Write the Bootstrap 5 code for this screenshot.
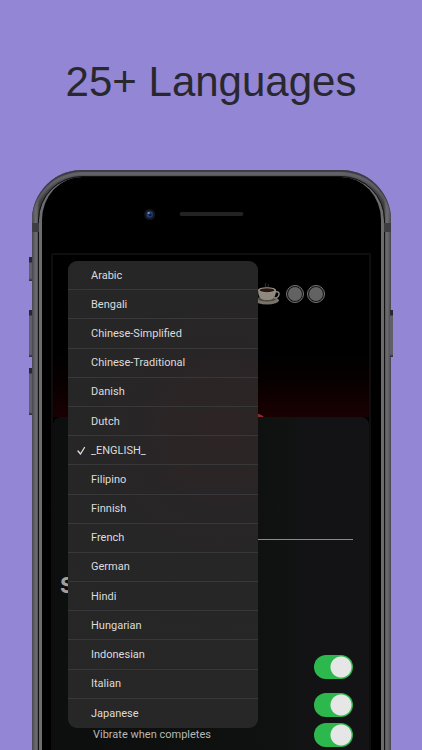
<!DOCTYPE html>
<html lang="en">
<head>
<meta charset="utf-8">
<meta name="viewport" content="width=device-width, initial-scale=1">
<title>25+ Languages</title>
<link href="https://cdn.jsdelivr.net/npm/bootstrap@5.3.0/dist/css/bootstrap.min.css" rel="stylesheet">
<style>
body{background:#9386d4;font-family:Roboto,"Liberation Sans",sans-serif;font-size:11px}
.stage{height:100vh}
.headline{font:400 42px/48px "Liberation Sans",Arial,sans-serif;color:#29282f;padding:58px 0 64px}
/* phone body: metal rim, groove, inner bezel */
.phone{margin:0 31px 0 32px;border-radius:50px 50px 0 0;padding:7px 7px 0;
 background:linear-gradient(90deg,#3c3a45 0,#5c5b61 2px,#6f6f72 4px,#55555a 6px,#3b3b40 7px,#3b3b40 calc(100% - 7px),#55555a calc(100% - 6px),#6f6f72 calc(100% - 4px),#5c5b61 calc(100% - 2px),#3c3a45 100%);
 box-shadow:inset 0 2px 1px #3c3a45,inset 0 6px 3px #66656b}
.glass{background:#000;border:solid #6c6c6e;border-width:0 3px;border-radius:43px 43px 0 0;outline:1px solid #111;padding:0 10px 0 9px}
.face{height:76px}
.band{position:absolute;top:53px;width:7px;height:9px;background:#3d3d42}
.side-key{position:absolute;width:3px;background:linear-gradient(#29282f 0 5px,#605f68 6px,#605f68 calc(100% - 3px),#29282f)}
.key-left{left:-3px}
.key-right{right:-2px}
.key-mute{top:87px;height:24px}
.key-upper{top:140px;height:47px}
.key-lower{top:198px;height:47px}
.screen{border:2px solid #0e0e0e;border-bottom:0;border-radius:2px 2px 0 0}
.hero{height:162px;background:linear-gradient(#000 0 60%,#080000 78%,#1a0002);padding:26px 43px 0 0}
.arc{position:absolute;right:104px;bottom:-1px}
.panel{background:linear-gradient(90deg,#0c0f0d,#0e110f 60%,#131315 85%);border-radius:8px 8px 0 0;padding:95px 16px 0 7px}
.field{width:140px;height:28px;background:none;border:0;border-bottom:1px solid #8a8a8a;color:#ccc;border-radius:0}
.section-title{font:700 22px/24px Inter,sans-serif;color:#a0a0a0;padding-top:33px}
.switches{padding-top:58px}
.setting{height:24px;padding-left:33px;color:#b8b8b8}
.setting + .setting{margin-top:14px}
.setting + .setting + .setting{margin-top:6px}
.setting .form-check-input{width:39px;height:24px;margin:0;border:0;background-color:#2db84e;box-shadow:none;
 background-image:radial-gradient(circle at 27px 12px,#e6e6e6 10px,transparent 11px);background-size:100% 100%;background-position:0 0}
.choices{position:absolute;left:36px;right:133px;top:91px;height:467px;grid-auto-rows:1fr;background:radial-gradient(circle at 80% 36%,#2d2425 0,#292526 22%,#262627 42%,#272728);border-radius:9px;overflow:hidden}
.choice{background:none;border:0;border-bottom:1px solid #38383a;color:#dcdcdc;font-size:11px;line-height:16px;padding:1px 8px 0}
.choice:last-child{border-bottom:0}
.tick{width:15px}
</style>
</head>
<body>
<div class="stage d-flex flex-column overflow-hidden">
<h1 class="headline text-center m-0">25+ Languages</h1>
<main class="phone position-relative flex-grow-1 d-flex flex-column">
 <span class="side-key key-left key-mute"></span>
 <span class="side-key key-left key-upper"></span>
 <span class="side-key key-left key-lower"></span>
 <span class="side-key key-right key-upper"></span>
 <span class="band start-0"></span><span class="band end-0"></span>
 <div class="glass flex-grow-1 d-flex flex-column">
  <div class="face">
   <svg class="d-block w-100" height="76" viewBox="0 0 321 76" preserveAspectRatio="xMidYMid meet" aria-hidden="true">
    <circle cx="99" cy="37.500" r="5.500" fill="#15171d"/><circle cx="99" cy="37.500" r="3.200" fill="#263d7c"/><circle cx="99.500" cy="38" r="1.500" fill="#111b3d"/><circle cx="98" cy="36" r="1" fill="#7b99db"/>
    <rect x="129" y="35" width="64" height="4" rx="2" fill="#232323"/>
   </svg>
  </div>
  <section class="screen flex-grow-1 d-flex flex-column">
   <div class="hero position-relative d-flex justify-content-end">
    <svg width="72" height="28" viewBox="0 0 72 28" aria-label="Coffee rounds" role="img">
     <ellipse cx="13" cy="19.500" rx="12" ry="4" fill="#77736a"/><ellipse cx="13" cy="18" rx="9" ry="2.500" fill="#4b4840"/>
     <path d="M21 11q4.500-1 4 2.500T20 17" fill="none" stroke="#8f8a80" stroke-width="1.500"/>
     <path d="M4 9q0 9 6 10h6q6-1 6-10z" fill="#8e897f"/><ellipse cx="13" cy="9" rx="9" ry="2.800" fill="#a29d92"/><ellipse cx="13" cy="9.200" rx="7.500" ry="2" fill="#2b1712"/>
     <path d="M12 6q-2-2 0-4m2 4q1-2 0-3" fill="none" stroke="#333" stroke-width="1"/>
     <g fill="#626262" stroke="#777"><circle cx="41" cy="13" r="8.500" fill="#111"/><circle cx="41" cy="13" r="7" stroke="none"/><circle cx="62" cy="13" r="8.500" fill="#111"/><circle cx="62" cy="13" r="7" stroke="none"/></g>
    </svg>
    <svg class="arc" width="12" height="4" viewBox="0 0 12 4" aria-hidden="true"><path d="M0 0h6q3 1 5 3H0z" fill="#8e2a30"/></svg>
   </div>
   <form class="panel flex-grow-1">
    <div class="d-flex justify-content-end"><input class="field" type="text" aria-label="Name"></div>
    <h2 class="section-title m-0">S</h2>
    <div class="switches">
     <div class="setting d-flex align-items-center justify-content-end form-switch"><input class="form-check-input" type="checkbox" role="switch" aria-label="Sound" checked></div>
     <div class="setting d-flex align-items-center justify-content-end form-switch"><input class="form-check-input" type="checkbox" role="switch" aria-label="Alerts" checked></div>
     <div class="setting d-flex align-items-center justify-content-between form-switch"><label for="vibrate">Vibrate when completes</label><input class="form-check-input" type="checkbox" role="switch" id="vibrate" checked></div>
    </div>
   </form>
  </section>
 </div>
 <div class="choices d-grid" role="group" aria-label="Language">
  <button class="choice d-flex align-items-center" type="button"><span class="tick"></span>Arabic</button>
  <button class="choice d-flex align-items-center" type="button"><span class="tick"></span>Bengali</button>
  <button class="choice d-flex align-items-center" type="button"><span class="tick"></span>Chinese-Simplified</button>
  <button class="choice d-flex align-items-center" type="button"><span class="tick"></span>Chinese-Traditional</button>
  <button class="choice d-flex align-items-center" type="button"><span class="tick"></span>Danish</button>
  <button class="choice d-flex align-items-center" type="button"><span class="tick"></span>Dutch</button>
  <button class="choice d-flex align-items-center" type="button" aria-pressed="true"><svg class="tick" height="9" viewBox="0 0 15 9" aria-hidden="true"><path d="M2 5l2.500 3L8.500 1.500" fill="none" stroke="#e0e0e0" stroke-width="1.300" stroke-linecap="round" stroke-linejoin="round"/></svg>_ENGLISH_</button>
  <button class="choice d-flex align-items-center" type="button"><span class="tick"></span>Filipino</button>
  <button class="choice d-flex align-items-center" type="button"><span class="tick"></span>Finnish</button>
  <button class="choice d-flex align-items-center" type="button"><span class="tick"></span>French</button>
  <button class="choice d-flex align-items-center" type="button"><span class="tick"></span>German</button>
  <button class="choice d-flex align-items-center" type="button"><span class="tick"></span>Hindi</button>
  <button class="choice d-flex align-items-center" type="button"><span class="tick"></span>Hungarian</button>
  <button class="choice d-flex align-items-center" type="button"><span class="tick"></span>Indonesian</button>
  <button class="choice d-flex align-items-center" type="button"><span class="tick"></span>Italian</button>
  <button class="choice d-flex align-items-center" type="button"><span class="tick"></span>Japanese</button>
 </div>
</main>
</div>
<script src="https://cdn.jsdelivr.net/npm/bootstrap@5.3.0/dist/js/bootstrap.bundle.min.js"></script>
</body>
</html>
